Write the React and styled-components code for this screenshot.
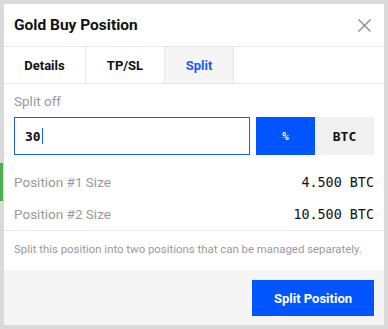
import React from "react";
import styled, { createGlobalStyle } from "styled-components";

const Global = createGlobalStyle`
  html, body { margin: 0; padding: 0; background: #dadada; }
  body { font-family: Roboto, "Liberation Sans", sans-serif; }
  * { box-sizing: border-box; }
`;

const Backdrop = styled.div`
  position: relative;
  width: 388px;
  height: 329px;
  padding: 4px;
  background: #dadada;
  overflow: hidden;
`;

const Ghost = styled.div`
  position: absolute;
  left: 0;
  top: 163px;
  width: 3px;
  height: 38px;
  background: #4caf50;
`;

const Modal = styled.div`
  position: relative;
  width: 380px;
  height: 321px;
  background: #fff;
  display: flex;
  flex-direction: column;
`;

const Header = styled.div`
  height: 43px;
  display: flex;
  align-items: center;
  justify-content: space-between;
  padding: 0 10px 0 10px;
  border-bottom: 1px solid #e6e6e6;
`;

const Title = styled.div`
  font-size: 15.5px;
  font-weight: 700;
  color: #111;
`;

const Close = styled.button`
  border: 0;
  background: none;
  padding: 0;
  width: 20px;
  height: 20px;
  display: flex;
  align-items: center;
  justify-content: center;
  cursor: pointer;
`;

const Tabs = styled.div`
  height: 37px;
  display: flex;
  border-bottom: 1px solid #e6e6e6;
`;

const Tab = styled.div`
  width: ${(p) => p.$w}px;
  display: flex;
  align-items: center;
  justify-content: center;
  font-size: 13px;
  font-weight: 700;
  color: ${(p) => (p.$active ? "#1a5cff" : "#111")};
  background: ${(p) => (p.$active ? "#f5f5f5" : "#fff")};
  border-right: 1px solid #e6e6e6;
`;

const Body = styled.div`
  padding: 0 10px;
  display: flex;
  flex-direction: column;
`;

const Label = styled.div`
  font-size: 13.5px;
  line-height: 16px;
  color: #9a9a9a;
  padding-top: 9px;
  margin-bottom: 8px;
`;

const InputRow = styled.div`
  display: flex;
  gap: 6px;
  height: 38px;
`;

const Input = styled.div`
  flex: 1;
  border: 1px solid #1a5cff;
  display: flex;
  align-items: center;
  padding-left: 10px;
  font-family: "DejaVu Sans Mono", "Liberation Mono", monospace;
  font-weight: 700;
  font-size: 13px;
  color: #111;
`;

const Caret = styled.span`
  display: inline-block;
  width: 1px;
  height: 16px;
  background: #1a5cff;
  margin-left: 1px;
`;

const Units = styled.div`
  display: flex;
  width: 118px;
`;

const Unit = styled.div`
  flex: 1;
  display: flex;
  align-items: center;
  justify-content: center;
  font-family: "DejaVu Sans Mono", "Liberation Mono", monospace;
  font-weight: 700;
  font-size: ${(p) => (p.$active ? "11px" : "13px")};
  color: ${(p) => (p.$active ? "#fff" : "#111")};
  background: ${(p) => (p.$active ? "#0055ff" : "#f0f0f0")};
`;

const Rows = styled.div`
  margin-top: 11px;
  border-bottom: 1px solid #e6e6e6;
  margin-left: -10px;
  margin-right: -10px;
  padding: 0 10px;
`;

const Row = styled.div`
  height: 32px;
  display: flex;
  align-items: center;
  justify-content: space-between;
`;

const RowLabel = styled.span`
  font-size: 13.5px;
  color: #9a9a9a;
`;

const RowValue = styled.span`
  font-family: "DejaVu Sans Mono", "Liberation Mono", monospace;
  font-size: 13.4px;
  color: #111;
`;

const Note = styled.div`
  font-size: 11.4px;
  line-height: 15px;
  color: #9a9a9a;
  padding: 11px 0 13px;
`;

const Footer = styled.div`
  margin-top: auto;
  height: 55px;
  background: #f5f5f5;
  display: flex;
  justify-content: flex-end;
  align-items: flex-start;
  padding: 10px 10px 0;
`;

const Primary = styled.button`
  width: 122px;
  height: 36px;
  border: 0;
  background: #0055ff;
  color: #fff;
  font-family: Roboto, "Liberation Sans", sans-serif;
  font-weight: 700;
  font-size: 13px;
  cursor: pointer;
`;

export default function App() {
  return (
    <>
      <Global />
      <Backdrop>
        <Ghost />
        <Modal>
          <Header>
            <Title>Gold Buy Position</Title>
            <Close aria-label="Close">
              <svg width="13" height="13" viewBox="0 0 13 13">
                <path d="M0.5 0.5 L12.5 12.5 M12.5 0.5 L0.5 12.5" stroke="#8a8a8a" strokeWidth="1.3" fill="none" />
              </svg>
            </Close>
          </Header>
          <Tabs>
            <Tab $w={82}>Details</Tab>
            <Tab $w={79}>TP/SL</Tab>
            <Tab $w={69} $active>Split</Tab>
          </Tabs>
          <Body>
            <Label>Split off</Label>
            <InputRow>
              <Input>30<Caret /></Input>
              <Units>
                <Unit $active>%</Unit>
                <Unit>BTC</Unit>
              </Units>
            </InputRow>
            <Rows>
              <Row>
                <RowLabel>Position #1 Size</RowLabel>
                <RowValue>4.500 BTC</RowValue>
              </Row>
              <Row>
                <RowLabel>Position #2 Size</RowLabel>
                <RowValue>10.500 BTC</RowValue>
              </Row>
            </Rows>
            <Note>Split this position into two positions that can be managed separately.</Note>
          </Body>
          <Footer>
            <Primary>Split Position</Primary>
          </Footer>
        </Modal>
      </Backdrop>
    </>
  );
}
